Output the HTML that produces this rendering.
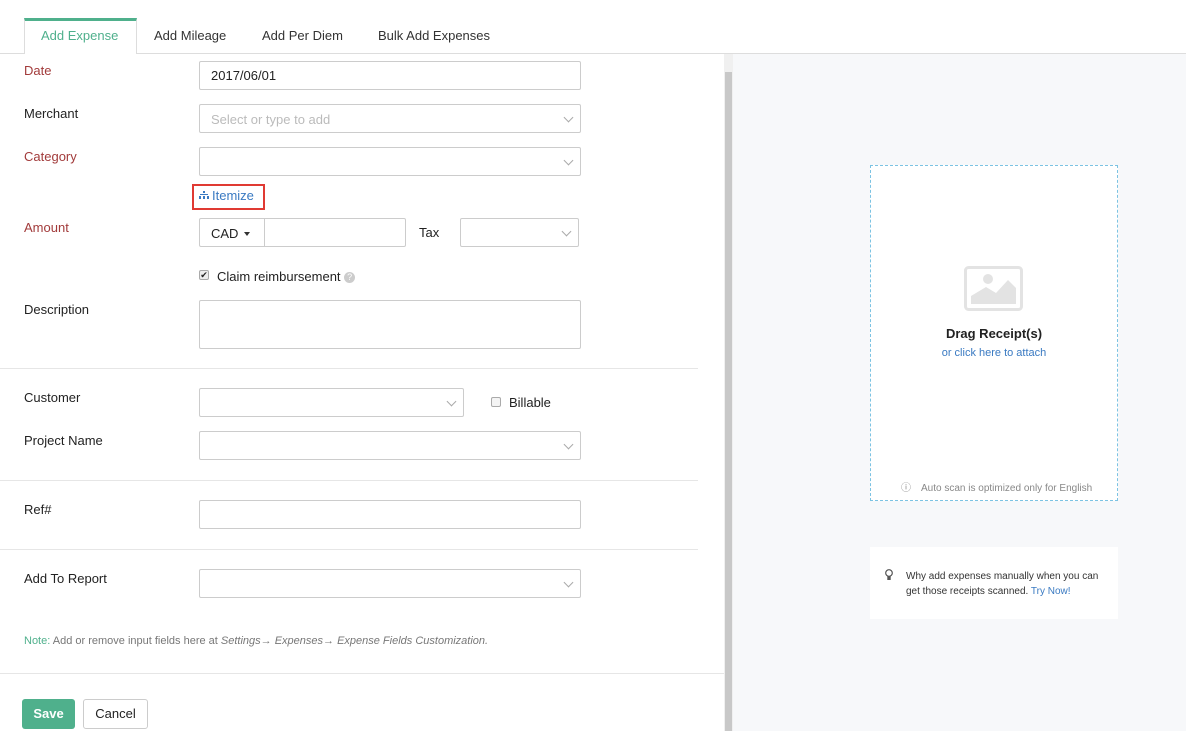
<!DOCTYPE html>
<html><head><style>
*{box-sizing:border-box;margin:0;padding:0}
body{width:1186px;height:731px;overflow:hidden;background:#fff;font-family:"Liberation Sans",sans-serif;font-size:13px;color:#222;position:relative}
.a{position:absolute}
.lbl{position:absolute;left:24px;font-size:13px;color:#222}
.req{color:#a23b3b}
.inp{position:absolute;border:1px solid #ccc;border-radius:2px;background:#fff;height:29px}
.chev{position:absolute;right:8px;top:9px;width:7px;height:7px;border-right:1.3px solid #aaa;border-bottom:1.3px solid #aaa;transform:rotate(45deg)}
.hr{position:absolute;left:0;width:698px;height:1px;background:#e6e6e6}
</style></head><body>
<div class="a" style="left:0;top:53px;width:1186px;height:1px;background:#ddd"></div>
<div class="a" style="left:24px;top:18px;width:113px;height:36px;background:#fff;border:1px solid #ddd;border-bottom:none;border-top:3px solid #4fb08c"></div>
<div class="a" style="left:41px;top:28px;font-size:13px;color:#4fb08c">Add Expense</div>
<div class="a" style="left:154px;top:28px;color:#333">Add Mileage</div>
<div class="a" style="left:262px;top:28px;color:#333">Add Per Diem</div>
<div class="a" style="left:378px;top:28px;color:#333">Bulk Add Expenses</div>

<div class="a" style="left:724px;top:54px;width:9px;height:677px;background:#f0f0f0"></div>
<div class="a" style="left:725px;top:72px;width:7px;height:659px;background:#c8c8c8"></div>
<div class="a" style="left:733px;top:54px;width:453px;height:677px;background:#f7f8fa"></div>

<div class="lbl req" style="top:63px">Date</div>
<div class="inp" style="left:199px;top:61px;width:382px"><span class="a" style="left:11px;top:6px;font-size:13px">2017/06/01</span></div>
<div class="lbl" style="top:106px">Merchant</div>
<div class="inp" style="left:199px;top:104px;width:382px"><span class="a" style="left:11px;top:7px;color:#bbb">Select or type to add</span><i class="chev"></i></div>
<div class="lbl req" style="top:149px">Category</div>
<div class="inp" style="left:199px;top:147px;width:382px"><i class="chev"></i></div>
<div class="a" style="left:192px;top:184px;width:73px;height:26px;border:2px solid #e03a33"></div>
<div class="a" style="left:199px;top:188px;color:#3a7ac2;font-size:13px"><svg width="10" height="9" viewBox="0 0 10 9" style="margin-right:3px"><rect x="4" y="0" width="2" height="2" fill="#3a7ac2"/><rect x="1" y="3" width="8" height="1" fill="#3a7ac2"/><rect x="0" y="5" width="2" height="3" fill="#3a7ac2"/><rect x="4" y="5" width="2" height="3" fill="#3a7ac2"/><rect x="8" y="5" width="2" height="3" fill="#3a7ac2"/></svg>Itemize</div>
<div class="lbl req" style="top:220px">Amount</div>
<div class="inp" style="left:199px;top:218px;width:66px;height:29px;border-radius:2px 0 0 2px"><span class="a" style="left:11px;top:7px">CAD</span><span class="a" style="left:44px;top:13px;border-left:3.5px solid transparent;border-right:3.5px solid transparent;border-top:4px solid #333"></span></div>
<div class="inp" style="left:264px;top:218px;width:142px;border-radius:0 2px 2px 0"></div>
<div class="a" style="left:419px;top:225px">Tax</div>
<div class="inp" style="left:460px;top:218px;width:119px"><i class="chev"></i></div>
<div class="a" style="left:199px;top:270px;width:10px;height:10px;border:1px solid #aaa;border-radius:2px;background:#eee;font-size:9px;line-height:8px;text-align:center">✔</div>
<div class="a" style="left:217px;top:269px">Claim reimbursement <span style="display:inline-block;width:11px;height:11px;border-radius:50%;background:#ccc;color:#fff;font-size:9px;text-align:center;line-height:11px;vertical-align:1px">?</span></div>
<div class="lbl" style="top:302px">Description</div>
<div class="inp" style="left:199px;top:300px;width:382px;height:49px"></div>
<div class="hr" style="top:368px"></div>
<div class="lbl" style="top:390px">Customer</div>
<div class="inp" style="left:199px;top:388px;width:265px"><i class="chev"></i></div>
<div class="a" style="left:491px;top:397px;width:10px;height:10px;border:1px solid #aaa;border-radius:2px;background:#f4f4f4"></div>
<div class="a" style="left:509px;top:395px">Billable</div>
<div class="lbl" style="top:433px">Project Name</div>
<div class="inp" style="left:199px;top:431px;width:382px"><i class="chev"></i></div>
<div class="hr" style="top:480px"></div>
<div class="lbl" style="top:502px">Ref#</div>
<div class="inp" style="left:199px;top:500px;width:382px"></div>
<div class="hr" style="top:549px"></div>
<div class="lbl" style="top:571px">Add To Report</div>
<div class="inp" style="left:199px;top:569px;width:382px"><i class="chev"></i></div>
<div class="a" style="left:24px;top:635px;font-size:11px;color:#777"><span style="color:#4fb08c">Note:</span> Add or remove input fields here at <i>Settings→ Expenses→ Expense Fields Customization.</i></div>
<div class="hr" style="top:673px;width:724px"></div>
<div class="a" style="left:22px;top:699px;width:53px;height:30px;background:#4fb08c;border-radius:3px;color:#fff;font-weight:bold;text-align:center;line-height:30px">Save</div>
<div class="a" style="left:83px;top:699px;width:65px;height:30px;border:1px solid #ccc;border-radius:3px;text-align:center;line-height:28px">Cancel</div>

<div class="a" style="left:870px;top:165px;width:248px;height:336px;background:#fff;border:1px dashed #7cc3e3"></div>
<svg class="a" style="left:964px;top:266px" width="60" height="46" viewBox="0 0 60 46"><rect x="1.5" y="1.5" width="56" height="42" rx="3" fill="none" stroke="#e3e3e3" stroke-width="3"/><circle cx="24" cy="13" r="5" fill="#e3e3e3"/><path d="M7 38 L7 30 L22 21 L32 27 L44 14 L52 22 L52 38 Z" fill="#e3e3e3"/></svg>
<div class="a" style="left:870px;top:326px;width:248px;text-align:center;font-weight:bold;font-size:13px;color:#222">Drag Receipt(s)</div>
<div class="a" style="left:870px;top:347px;width:248px;text-align:center;font-size:11px;color:#3a7ac2">or click here to attach</div>
<div class="a" style="left:901px;top:479px;font-size:10px;color:#888">ⓘ<span style="margin-left:10px">Auto scan is optimized only for English</span></div>
<div class="a" style="left:870px;top:547px;width:248px;height:72px;background:#fff"></div>
<svg class="a" style="left:885px;top:569px" width="8" height="12" viewBox="0 0 8 12"><circle cx="4" cy="4" r="3.3" fill="none" stroke="#555" stroke-width="1.2"/><rect x="2.3" y="7.5" width="3.4" height="3.5" fill="#555"/></svg>
<div class="a" style="left:906px;top:570px;font-size:10px;color:#333;line-height:14.5px">Why add expenses manually when you can<br>get those receipts scanned. <span style="color:#3a7ac2">Try Now!</span></div>
</body></html>
